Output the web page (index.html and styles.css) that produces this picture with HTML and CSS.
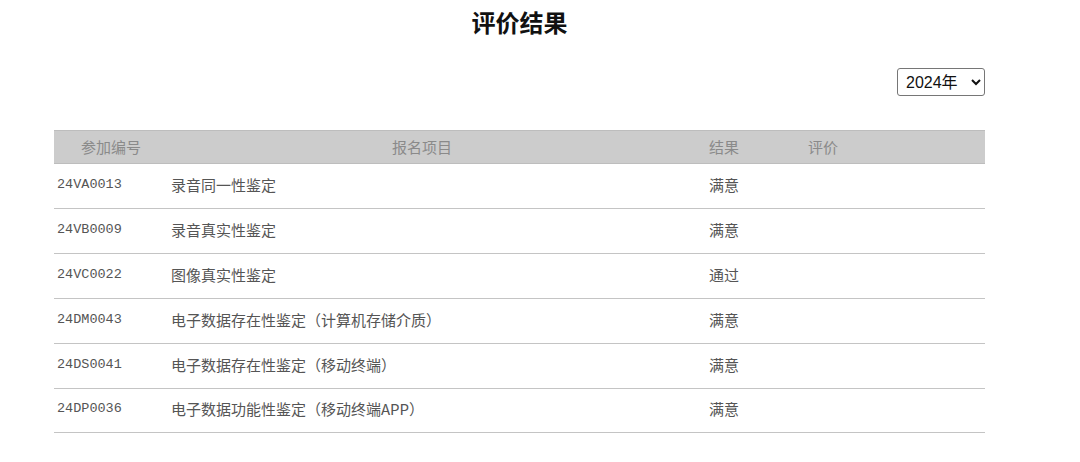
FILE: index.html
```html
<!DOCTYPE html>
<html lang="zh">
<head>
<meta charset="utf-8">
<title>评价结果</title>
<link rel="stylesheet" href="styles.css">
</head>
<body>
<div class="page">
  <h1 class="title">评价结果</h1>
  <div class="toolbar">
    <select class="year">
      <option>2024年</option>
      <option>2023年</option>
    </select>
  </div>
  <div class="table">
    <div class="row head">
      <div class="c c1">参加编号</div>
      <div class="c c2">报名项目</div>
      <div class="c c3">结果</div>
      <div class="c c4">评价</div>
      <div class="c c5"></div>
    </div>
    <div class="row">
      <div class="c c1 code">24VA0013</div>
      <div class="c c2">录音同一性鉴定</div>
      <div class="c c3">满意</div>
      <div class="c c4"></div>
      <div class="c c5"></div>
    </div>
    <div class="row">
      <div class="c c1 code">24VB0009</div>
      <div class="c c2">录音真实性鉴定</div>
      <div class="c c3">满意</div>
      <div class="c c4"></div>
      <div class="c c5"></div>
    </div>
    <div class="row">
      <div class="c c1 code">24VC0022</div>
      <div class="c c2">图像真实性鉴定</div>
      <div class="c c3">通过</div>
      <div class="c c4"></div>
      <div class="c c5"></div>
    </div>
    <div class="row">
      <div class="c c1 code">24DM0043</div>
      <div class="c c2">电子数据存在性鉴定（计算机存储介质）</div>
      <div class="c c3">满意</div>
      <div class="c c4"></div>
      <div class="c c5"></div>
    </div>
    <div class="row">
      <div class="c c1 code">24DS0041</div>
      <div class="c c2">电子数据存在性鉴定（移动终端）</div>
      <div class="c c3">满意</div>
      <div class="c c4"></div>
      <div class="c c5"></div>
    </div>
    <div class="row">
      <div class="c c1 code">24DP0036</div>
      <div class="c c2">电子数据功能性鉴定（移动终端APP）</div>
      <div class="c c3">满意</div>
      <div class="c c4"></div>
      <div class="c c5"></div>
    </div>
  </div>
</div>
</body>
</html>
```

FILE: styles.css
```css
html, body {
  margin: 0;
  padding: 0;
  background: #fff;
}
body {
  font-family: "Noto Sans CJK SC", "Noto Sans", sans-serif;
  color: #555;
}
.page {
  width: 931px;
  margin-left: 54px;
  padding-top: 8px;
}
.title {
  margin: 0;
  text-align: center;
  font-size: 24px;
  line-height: 32px;
  font-weight: 700;
  color: #111;
  font-family: "Liberation Sans", "Noto Sans CJK SC", sans-serif;
}
.toolbar {
  display: flex;
  justify-content: flex-end;
  margin-top: 28px;
}
.year {
  height: 28px;
  width: 88px;
  font-size: 16px;
  font-family: "Liberation Sans", "Noto Sans CJK SC", sans-serif;
  color: #111;
  border: 1px solid #767676;
  border-radius: 3px;
  background: #fff;
  padding: 0 2px 0 4px;
}
.table {
  margin-top: 34px;
}
.row {
  display: grid;
  grid-template-columns: 111px 508px 102px 96px 1fr;
  height: 44px;
  align-items: center;
  border-bottom: 1px solid #c4c4c4;
  font-size: 15px;
  line-height: 20px;
  color: #555;
}
.row:nth-child(6),
.row:nth-child(7) {
  height: 43.5px;
}
.row.head {
  height: 32px;
  background: #cccccc;
  border-top: 1px solid #bdbdbd;
  border-bottom: 1px solid #bdbdbd;
  color: #8a8a8a;
}
.row:not(.head) .c {
  padding-bottom: 2px;
}
.head .c {
  text-align: center;
}
.c1 {
  padding-left: 3px;
}
.c2 {
  padding-left: 6px;
}
.c3 {
  text-align: center;
}
.code {
  font-family: "Liberation Mono", "DejaVu Sans Mono", monospace;
  font-size: 13.5px;
  color: #555;
}
```
